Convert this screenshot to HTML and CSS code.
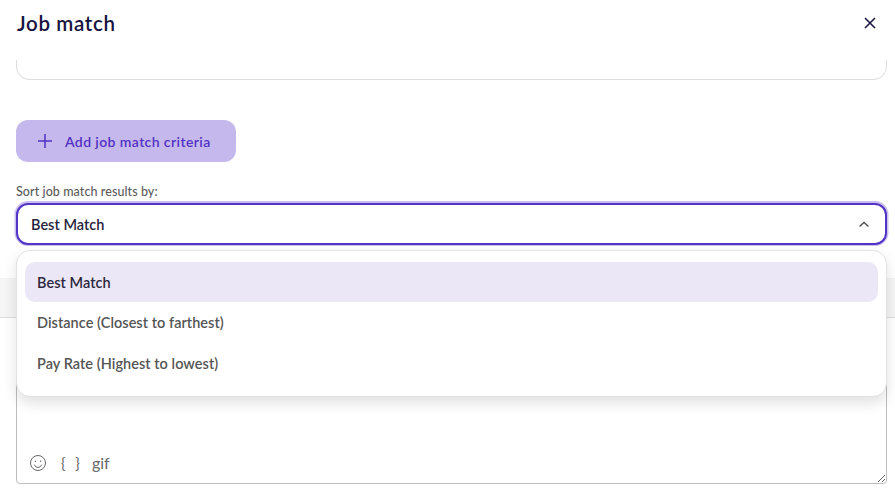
FILE: index.html
```html
<!DOCTYPE html>
<html lang="en">
<head>
<meta charset="utf-8">
<title>Job match</title>
<link rel="stylesheet" href="styles.css">
</head>
<body>
<div class="modal">
  <header class="modal-head">
    <h1 class="title">Job match</h1>
    <svg class="close" width="12" height="12" viewBox="0 0 12 12" aria-label="Close"><path d="M1 1l10 10M11 1L1 11"/></svg>
  </header>
  <div class="body">
    <div class="card-end"></div>
    <button class="add-btn" type="button">
      <svg class="plus" width="16" height="16" viewBox="0 0 16 16"><path d="M8 1v14M1 8h14"/></svg>
      <span>Add job match criteria</span>
    </button>
    <div class="field">
      <label class="label">Sort job match results by:</label>
      <div class="select">
        <span>Best Match</span>
        <svg class="chev" width="12" height="7" viewBox="0 0 12 7"><path d="M1.500 5.500L6 1.500l4.500 4"/></svg>
      </div>
      <ul class="menu">
        <li class="opt active">Best Match</li>
        <li class="opt">Distance (Closest to farthest)</li>
        <li class="opt">Pay Rate (Highest to lowest)</li>
      </ul>
    </div>
    <div class="band"></div>
    <div class="composer">
      <textarea class="area"></textarea>
      <div class="tools">
        <svg class="smile" width="18" height="18" viewBox="0 0 18 18"><circle cx="9" cy="9" r="7.500"/><circle cx="6.400" cy="7.200" r=".7" class="eye"/><circle cx="11.600" cy="7.200" r=".7" class="eye"/><path d="M5.200 10.600c1 2 2.400 2.800 3.800 2.800s2.800-.8 3.800-2.800"/></svg>
        <span class="braces">{ }</span>
        <span class="gif">gif</span>
      </div>
    </div>
  </div>
</div>
</body>
</html>
```
FILE: styles.css
```css
* { box-sizing: border-box; }
html, body { margin: 0; padding: 0; background: #fff; }
body { font-family: "Lato", "Liberation Sans", sans-serif; }
.modal { width: 895px; height: 495px; overflow: hidden; display: flex; flex-direction: column; }
.modal-head { height: 60px; flex: none; padding: 0 19px 14px 17px; display: flex; align-items: center; justify-content: space-between; }
.title { margin: 0; font-size: 20.500px; font-weight: 600; color: #16123f; letter-spacing: .65px; }
.close { fill: none; stroke: #16123f; stroke-width: 1.500; }
.body { flex: 1; padding: 0 8px 0 16px; position: relative; }
.card-end { height: 20px; border: 1px solid #dedede; border-top: 0; border-radius: 0 0 14px 14px; }
.add-btn { margin-top: 40px; width: 220px; height: 42px; border: 0; border-radius: 12px; background: #c4b8ec; color: #5231c4; font: 600 14px "Lato", sans-serif; letter-spacing: .4px; display: flex; align-items: center; gap: 12px; padding: 0 0 0 21px; }
.plus { fill: none; stroke: #5231c4; stroke-width: 1.500; }
.field { position: relative; margin-top: 22px; }
.label { display: block; font-size: 12.500px; line-height: 16px; color: #5d5d5d; font-weight: 500; letter-spacing: .08px; }
.select { margin-top: 3px; height: 42px; border: 2px solid #5434c4; border-radius: 12px; box-shadow: 0 -.5px 0 1.500px #c9beee; padding: 0 15px 0 13px; display: flex; align-items: center; justify-content: space-between; font-size: 14.500px; font-weight: 600; letter-spacing: .02px; color: #26233c; background: #fff; }
.chev { fill: none; stroke: #555; stroke-width: 1.500; }
.menu { position: absolute; z-index: 2; left: 0; right: 0; top: 66px; height: 147px; margin: 0; padding: 11px 8px 0; list-style: none; background: #fff; border: 1px solid #e2e2e2; border-radius: 14px; box-shadow: 0 6px 14px rgba(0,0,0,.12); }
.opt { height: 40.500px; line-height: 41px; padding-left: 12px; border-radius: 10px; font-size: 14.500px; font-weight: 600; letter-spacing: .04px; color: #555; }
.opt.active { background: #ebe7f7; color: #2b2840; height: 40px; }
.band { position: absolute; left: 0; right: 0; top: 218px; height: 40px; background: #f5f5f5; border-bottom: 1px solid #dcdcdc; }
.composer { position: absolute; left: 16px; right: 8px; top: 280px; height: 144px; }
.area { display: block; width: 100%; height: 100%; margin: 0; border: 1px solid #bdbdbd; border-radius: 4px; background: #fff; resize: both; outline: 0; }
.tools { position: absolute; left: 13px; bottom: 12px; display: flex; align-items: center; gap: 9px; color: #666; opacity: .99; }
.smile { fill: none; stroke: #666; stroke-width: 1; }
.smile .eye { fill: #666; stroke: none; }
.braces { font-size: 15px; letter-spacing: 3px; margin-left: 5px; }
.gif { font-size: 16px; }
```
